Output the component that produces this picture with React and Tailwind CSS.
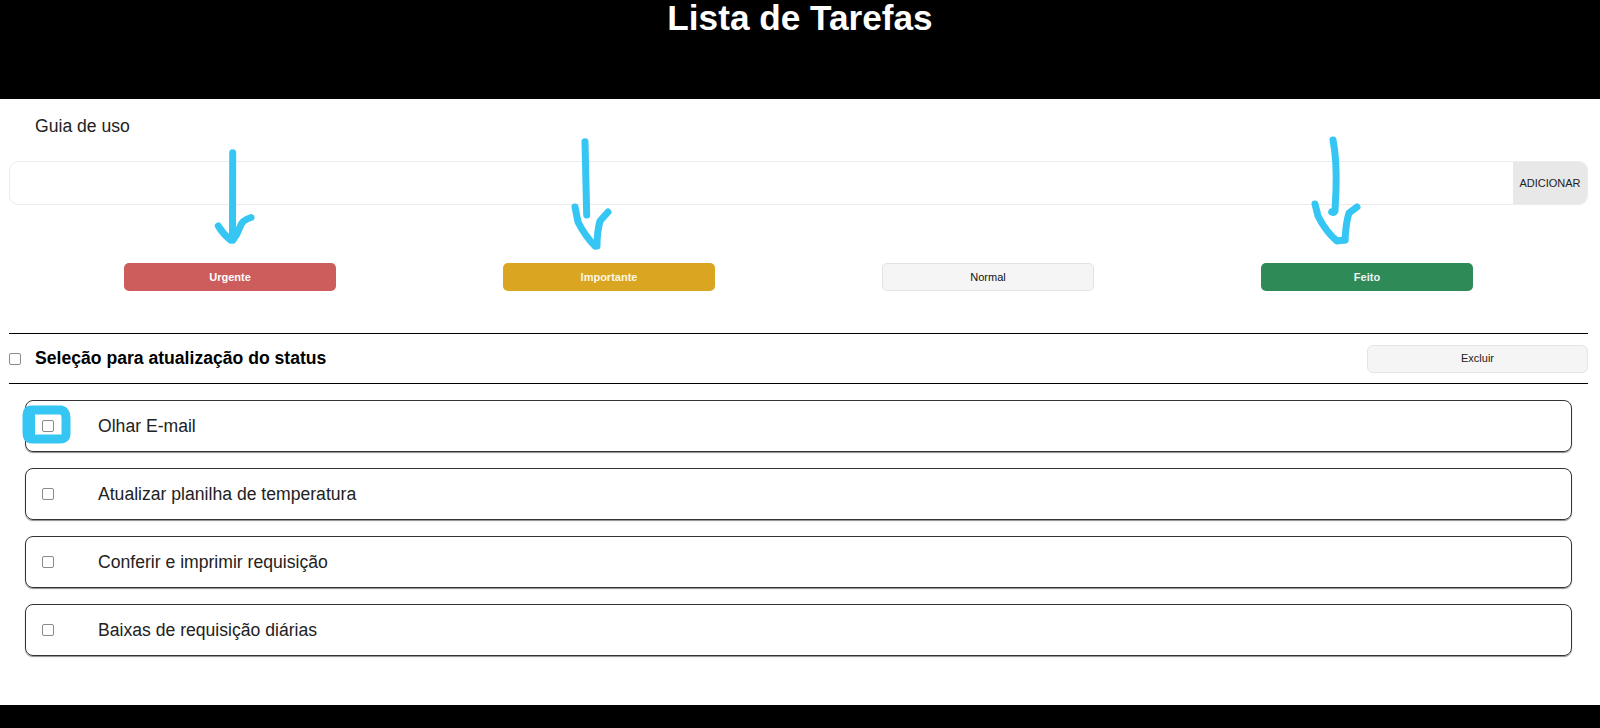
import React from "react";

const tasks = [
  "Olhar E-mail",
  "Atualizar planilha de temperatura",
  "Conferir e imprimir requisição",
  "Baixas de requisição diárias",
];

function Box() {
  return (
    <span className="block w-[12px] h-[12px] shrink-0 rounded-[2px] border border-[#8a8a8a] bg-white" />
  );
}

function Annotations() {
  const c = "#36c6f4";
  return (
    <svg
      className="absolute top-0 left-0 pointer-events-none"
      width="1600"
      height="728"
      viewBox="0 0 1600 728"
      fill="none"
      stroke={c}
      strokeLinecap="round"
      strokeLinejoin="round"
    >
      <g strokeWidth="7">
        <path d="M232.7 152.7 L232.5 236" />
        <path d="M218.3 226 Q223 234 230.5 240" />
        <path d="M251 217.5 Q242 220 240 227 Q237 235 233 240" />

        <path d="M585 141.7 L586.7 215" />
        <path d="M575 207 L578 222 Q585 236 595 246" />
        <path d="M608 212 L600 221 Q597 232 597 246" />

        <path d="M1333 140 Q1337 160 1336 190 L1335 211 Q1334 213 1331.7 212" />
        <path d="M1315 204 L1318 216 Q1326 232 1337 241 L1345 240" />
        <path d="M1357 207 L1349 213 Q1346 222 1345 240" />
      </g>
      <path
        strokeWidth="9"
        d="M31 410 L61 410 Q66 411 66 418 L66 434 Q66 439 60 439 L32 439 Q27 439 27 432 L27 415 Q27 410 31 410 Z"
      />
      <path strokeWidth="6" d="M32 413 L32 435" />
    </svg>
  );
}

export default function App() {
  return (
    <div
      className="relative flex flex-col min-h-screen h-[728px] bg-white text-[#222] overflow-hidden"
      style={{ fontFamily: '"Liberation Sans", Arial, sans-serif' }}
    >
      <header className="h-[99px] bg-black shrink-0">
        <h1 className="text-center text-white font-bold text-[35.2px] leading-none">
          Lista de Tarefas
        </h1>
      </header>

      <main className="flex-1 pl-[9px] pr-[12px] pt-[17px]">
        <p className="ml-[26px] text-[17.6px] leading-[20px] text-[#222]">Guia de uso</p>

        <div className="mt-[25px] flex h-[44px] rounded-[9px] border border-[#ececec] overflow-hidden">
          <div className="flex-1" />
          <button className="w-[74px] bg-[#e8e8e8] text-[11px] text-[#222] flex items-center justify-center">
            ADICIONAR
          </button>
        </div>

        <div className="mt-[58px] ml-[31.5px] w-[1516px] grid grid-cols-4">
          <div className="flex justify-center">
            <button className="w-[212px] h-[28px] rounded-[5px] bg-[#cd5c5c] text-white font-bold text-[11px]">
              Urgente
            </button>
          </div>
          <div className="flex justify-center">
            <button className="w-[212px] h-[28px] rounded-[5px] bg-[#daa520] text-[#fdf6e3] font-bold text-[11px]">
              Importante
            </button>
          </div>
          <div className="flex justify-center">
            <button className="w-[212px] h-[28px] rounded-[5px] bg-[#f5f5f5] border border-[#e2e2e2] text-[#111] text-[11px]">
              Normal
            </button>
          </div>
          <div className="flex justify-center">
            <button className="w-[212px] h-[28px] rounded-[5px] bg-[#2e8b57] text-[#f2f2f2] font-bold text-[11px]">
              Feito
            </button>
          </div>
        </div>

        <div className="mt-[42px] border-t border-black" />
        <div className="h-[49px] flex items-center">
          <Box />
          <span className="ml-[14px] font-bold text-[17.6px] text-black">
            Seleção para atualização do status
          </span>
          <button className="ml-auto w-[221px] h-[28px] rounded-[6px] bg-[#f5f5f5] border border-[#e4e4e4] text-[11px] text-[#222]">
            Excluir
          </button>
        </div>
        <div className="border-t border-black" />

        <ul className="mt-[16px] mx-[16px] flex flex-col gap-[16px]">
          {tasks.map((t) => (
            <li
              key={t}
              className="h-[52px] flex items-center rounded-[8px] border border-[#333] shadow-[0_1px_1px_rgba(0,0,0,0.45)] pl-[16px]"
            >
              <Box />
              <span className="ml-[44px] text-[17.6px] text-[#222]">{t}</span>
            </li>
          ))}
        </ul>
      </main>

      <footer className="h-[23px] bg-black shrink-0" />

      <Annotations />
    </div>
  );
}
